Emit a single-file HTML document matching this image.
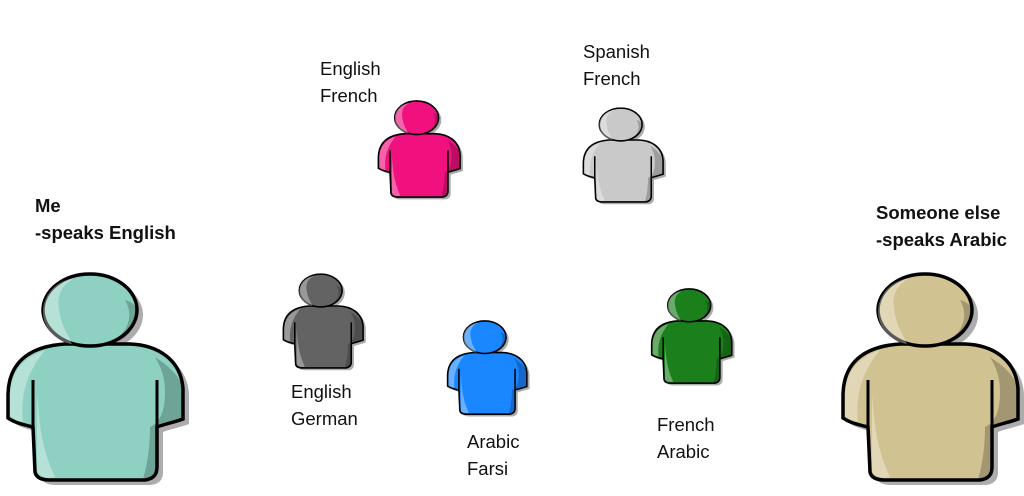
<!DOCTYPE html>
<html><head><meta charset="utf-8"><style>
body{margin:0;width:1024px;height:496px;background:#fff;position:relative;overflow:hidden;font-family:"Liberation Sans",sans-serif;}
svg.p{position:absolute;overflow:visible}
.t{position:absolute;font-size:18.5px;line-height:27px;color:#111;white-space:nowrap}
.b{font-weight:bold}
</style></head><body>
<svg width="0" height="0" style="position:absolute">
<defs>
<symbol id="per" viewBox="0 0 180 212" overflow="visible">
<g transform="translate(6,5)" fill="#8a8a8a" opacity="0.7">
<path d="M60 72 C30 74 4 86 3 122 L3 146 C10 151 20 153 28 155 L30 200 C31 205 36 208 45 208 L140 208 C148 207 152 203 152 195 L152 155 C160 152 170 150 178 147 L178 117 C176 87 152 73 125 72 Z"/>
<ellipse cx="85" cy="38" rx="47" ry="36"/>
</g>
<path d="M60 72 C30 74 4 86 3 122 L3 146 C10 151 20 153 28 155 L30 200 C31 205 36 208 45 208 L140 208 C148 207 152 203 152 195 L152 155 C160 152 170 150 178 147 L178 117 C176 87 152 73 125 72 Z" fill="currentColor" stroke="#000" stroke-width="3.5"/>
<path d="M150 85 C165 95 176 105 177 117 L177 146 C170 150 162 152 152 155 L152 195 C150 205 145 207 138 207 C142 195 145 175 145 155 C155 150 160 140 160 120 C160 105 156 95 150 85Z" fill="#000" opacity="0.22"/>
<path d="M40 78 C20 85 6 98 5 122 L5 144 C10 148 14 150 18 150 C16 130 18 105 40 78Z M32 120 C34 150 36 175 50 205 L45 206 C38 206 33 203 32 198Z" fill="#fff" opacity="0.35"/>
<path d="M28 108 L28 155 M152 108 L152 155" stroke="#000" stroke-width="3" fill="none"/>
<ellipse cx="85" cy="38" rx="47" ry="36" fill="currentColor" stroke="#000" stroke-width="3.5"/>
<path d="M70 6 C58 12 50 22 55 42 C57 55 62 60 67 72 C50 70 38 55 38 40 C38 22 52 8 70 6Z" fill="#fff" opacity="0.35"/>
<path d="M120 28 C130 45 122 65 100 72 C118 72 132 58 132 40 C132 35 128 30 120 28Z" fill="#000" opacity="0.22"/>
<path d="M152 108 L152 155 M28 108 L28 155" stroke="#000" stroke-width="3"/>
</symbol>
</defs></svg>

<svg class="p" style="left:5px;top:272px;color:#8ed1c2" width="180" height="212"><use href="#per"/></svg>
<svg class="p" style="left:840px;top:272px;color:#d1c291" width="180" height="212"><use href="#per"/></svg>
<svg class="p" style="left:377px;top:100px;color:#f0117f" width="84" height="99"><use href="#per"/></svg>
<svg class="p" style="left:582px;top:107px;color:#c9c9c9" width="82" height="97"><use href="#per"/></svg>
<svg class="p" style="left:282px;top:273px;color:#636363" width="82" height="97"><use href="#per"/></svg>
<svg class="p" style="left:446px;top:320px;color:#1a86ff" width="82" height="96"><use href="#per"/></svg>
<svg class="p" style="left:650px;top:288px;color:#1b7f1b" width="83" height="97"><use href="#per"/></svg>

<div class="t b" style="left:35px;top:192px">Me<br>-speaks English</div>
<div class="t b" style="left:876px;top:199px">Someone else<br>-speaks Arabic</div>
<div class="t" style="left:320px;top:55px">English<br>French</div>
<div class="t" style="left:583px;top:38px">Spanish<br>French</div>
<div class="t" style="left:291px;top:378px">English<br>German</div>
<div class="t" style="left:467px;top:428px">Arabic<br>Farsi</div>
<div class="t" style="left:657px;top:411px">French<br>Arabic</div>
</body></html>
